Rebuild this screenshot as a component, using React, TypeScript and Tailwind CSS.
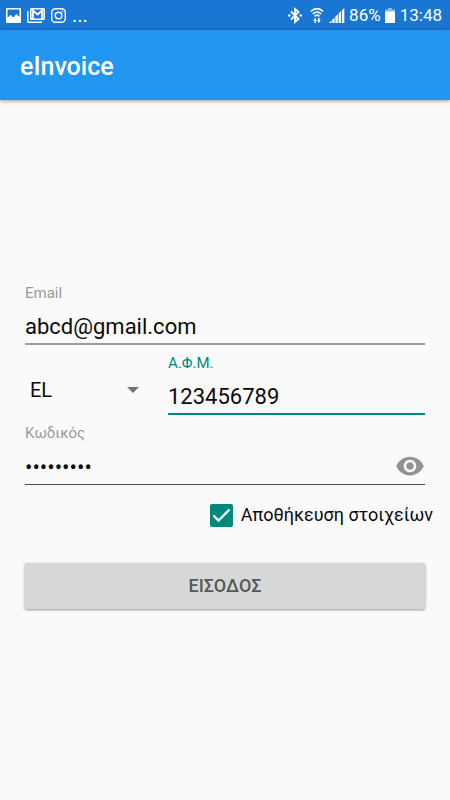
import { useState } from "react";
import type { ReactNode } from "react";

interface FieldProps {
    id: string;
    label: string;
    type?: string;
    value: string;
    active?: boolean;
    lineClass: string;
    onChange: (value: string) => void;
    children?: ReactNode;
}

const Field = (props: FieldProps) => {
    const { id, label, type = "text", value, active, lineClass, onChange, children } = props;

    return (
        <div className="flex flex-col">
            <label
                htmlFor={id}
                className={`text-[15px] leading-5 ${active ? "text-[#00897b]" : "text-[#999999]"}`}
            >
                {label}
            </label>
            <div className={`flex h-[42px] items-center pt-2 ${lineClass}`}>
                <input
                    id={id}
                    type={type}
                    value={value}
                    onChange={(e) => onChange(e.target.value)}
                    className="w-full min-w-0 flex-1 bg-transparent text-[22px] leading-8 text-[#0a0a0a] outline-none"
                />
                {children}
            </div>
        </div>
    );
};

const StatusBar = () => (
    <div className="flex h-[30px] items-center justify-between bg-[#1976d2] pl-[6px] pr-2 text-white">
        <div className="flex items-center gap-[6px]">
            <svg width="15" height="15" viewBox="0 0 15 15" aria-hidden="true">
                <path
                    fill="currentColor"
                    fillRule="evenodd"
                    d="M1 0h13a1 1 0 0 1 1 1v13a1 1 0 0 1-1 1H1a1 1 0 0 1-1-1V1a1 1 0 0 1 1-1zM1.5 1.5v8.200L4.500 6.800l2.500 2.800 3.500-3.500 3 3V1.500z"
                />
            </svg>
            <svg width="18" height="15" viewBox="0 0 18 15" fill="none" stroke="currentColor" aria-hidden="true">
                <path strokeWidth="1.500" d="M.8 3v10.200a1 1 0 0 0 1 1H15" />
                <rect x="3.800" y=".8" width="13.400" height="10.400" rx=".8" strokeWidth="1.600" />
                <path strokeWidth="1.800" d="M6 11V2.500l4.500 4 4.500-4V11" />
            </svg>
            <svg width="15" height="15" viewBox="0 0 15 15" fill="none" stroke="currentColor" strokeWidth="1.400" aria-hidden="true">
                <rect x=".7" y=".7" width="13.600" height="13.600" rx="3.800" />
                <circle cx="7.500" cy="7.500" r="3.300" />
                <circle cx="11.300" cy="3.700" r=".4" strokeWidth="1" />
            </svg>
            <span className="text-xl leading-5">...</span>
        </div>

        <div className="flex items-center">
            <svg className="mr-2" width="14" height="17" viewBox="0 0 14 17" fill="none" stroke="currentColor" aria-hidden="true">
                <path strokeWidth="1.800" d="M3 4.500l7.500 7.500L7 15V2l3.500 3L3 12.500" />
                <path strokeWidth="2" d="M0 8.500h2.500M11.500 8.500H14" />
            </svg>
            <svg className="mr-[5px]" width="14" height="17" viewBox="0 0 14 17" fill="none" stroke="currentColor" aria-hidden="true">
                <path strokeWidth="1.600" d="M.8 4.500Q7-1.200 13.200 4.500M2.800 7Q7 3 11.200 7M4.600 9.300Q7 7 9.400 9.300" />
                <path fill="currentColor" stroke="none" d="M3 13.500L5.200 10.800 7 13.500H6v2.500H4.400V13.500zM7 13.300h1.100V11h1.600v2.300h1.100L8.900 16z" />
            </svg>
            <svg className="mr-1" width="16" height="15" viewBox="0 0 16 15" fill="currentColor" aria-hidden="true">
                <path d="M0 15l2.400-2.400V15zM3.200 11.800l2.400-2.400V15H3.200zM6.400 8.600l2.400-2.400V15H6.400zM9.600 5.400L12 3v12H9.600zM12.900 2.200L15.300 0v15h-2.400z" />
            </svg>
            <span className="text-[17px] leading-5">86%</span>
            <svg className="ml-1 mr-[5px]" width="10" height="15" viewBox="0 0 10 15" fill="currentColor" aria-hidden="true">
                <path opacity=".5" d="M3 0h4v1.500h3V4H0V1.500h3z" />
                <path d="M0 3.500h10V15H0z" />
            </svg>
            <span className="text-[17px] leading-5">13:48</span>
        </div>
    </div>
);

const App = () => {
    const [email, setEmail] = useState("abcd@gmail.com");
    const [country, setCountry] = useState("EL");
    const [vat, setVat] = useState("123456789");
    const [password, setPassword] = useState("password1");
    const [visible, setVisible] = useState(false);
    const [remember, setRemember] = useState(true);

    return (
        <div className="flex min-h-screen flex-col bg-[#fafafa] font-[Roboto,'Noto_Sans',sans-serif] text-[#0a0a0a]">
            <StatusBar />
            <header className="flex h-[70px] items-center bg-[#2196f3] px-5 pt-1 shadow-[0_1px_4px_rgba(0,0,0,0.4)]">
                <h1 className="text-[25px] font-medium leading-8 text-white">eInvoice</h1>
            </header>

            <main className="flex flex-1 flex-col justify-center pb-2">
                <form className="flex flex-col px-[25px]" onSubmit={(e) => e.preventDefault()}>
                    <Field
                        id="email"
                        label="Email"
                        value={email}
                        lineClass="border-b-2 border-[#9c9c9c]"
                        onChange={setEmail}
                    />

                    <div className="mt-2 flex">
                        <div className="relative mr-7 flex w-[115px] items-center pt-3">
                            <select
                                aria-label="Χώρα"
                                value={country}
                                onChange={(e) => setCountry(e.target.value)}
                                className="h-10 w-full appearance-none bg-transparent pl-[5px] text-xl outline-none"
                            >
                                <option value="EL">EL</option>
                                <option value="CY">CY</option>
                            </select>
                            <svg
                                className="pointer-events-none absolute right-px"
                                width="12"
                                height="6"
                                viewBox="0 0 12 6"
                                aria-hidden="true"
                            >
                                <path fill="#737373" d="M0 0h12L6 6z" />
                            </svg>
                        </div>
                        <div className="flex-1">
                            <Field
                                id="vat"
                                label="Α.Φ.Μ."
                                value={vat}
                                active
                                lineClass="border-b-2 border-[#00897b]"
                                onChange={setVat}
                            />
                        </div>
                    </div>

                    <div className="mt-2">
                        <Field
                            id="password"
                            label="Κωδικός"
                            type={visible ? "text" : "password"}
                            value={password}
                            lineClass="border-b border-[#4d4d4d]"
                            onChange={setPassword}
                        >
                            <button
                                type="button"
                                aria-label="Εμφάνιση κωδικού"
                                onClick={() => setVisible(!visible)}
                                className="pb-1 text-[#949494]"
                            >
                                <svg width="30" height="30" viewBox="0 0 24 24" fill="currentColor" aria-hidden="true">
                                    <path d="M12 4.500C7 4.500 2.730 7.610 1 12c1.730 4.390 6 7.500 11 7.500s9.270-3.110 11-7.500c-1.730-4.390-6-7.500-11-7.500zM12 17c-2.760 0-5-2.240-5-5s2.240-5 5-5 5 2.240 5 5-2.240 5-5 5zm0-8c-1.660 0-3 1.340-3 3s1.340 3 3 3 3-1.340 3-3-1.340-3-3-3z" />
                                </svg>
                            </button>
                        </Field>
                    </div>

                    <label className="-mr-2 mt-4 flex items-center justify-end gap-2 text-lg leading-7">
                        <span className="grid size-[23px]">
                            <input
                                type="checkbox"
                                checked={remember}
                                onChange={(e) => setRemember(e.target.checked)}
                                className="peer col-start-1 row-start-1 appearance-none rounded-xs border-2 border-[#757575] checked:border-[#00897b] checked:bg-[#00897b]"
                            />
                            <svg
                                className="pointer-events-none invisible col-start-1 row-start-1 peer-checked:visible"
                                viewBox="0 0 23 23"
                                fill="none"
                                stroke="white"
                                strokeWidth="2.400"
                                aria-hidden="true"
                            >
                                <path d="M3.500 11.500l5 5L19.500 5.500" />
                            </svg>
                        </span>
                        Αποθήκευση στοιχείων
                    </label>

                    <button
                        type="submit"
                        className="mt-[34px] h-[46px] rounded-xs bg-[#d6d8d7] text-lg font-medium text-[#555857] shadow-[0_1px_3px_rgba(0,0,0,0.4)]"
                    >
                        ΕΙΣΟΔΟΣ
                    </button>
                </form>
            </main>
        </div>
    );
};

export default App;
